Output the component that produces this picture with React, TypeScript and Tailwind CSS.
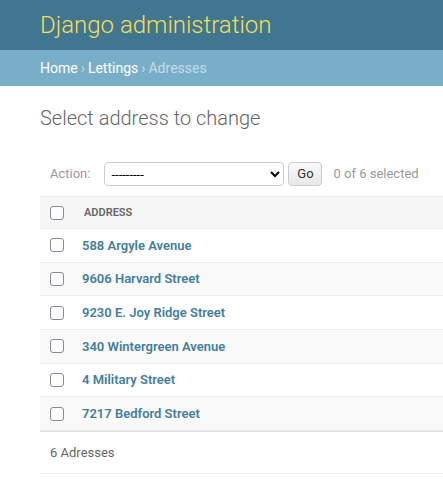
import React from 'react';

const ADDRESSES = [
  '588 Argyle Avenue',
  '9606 Harvard Street',
  '9230 E. Joy Ridge Street',
  '340 Wintergreen Avenue',
  '4 Military Street',
  '7217 Bedford Street',
];

const Box = () => (
  <input
    type="checkbox"
    className="m-0 h-[14px] w-[14px] shrink-0 appearance-none rounded-[3px] border border-[#8a8796] bg-white"
  />
);

export default function App() {
  return (
    <div className="min-h-[501px] bg-white font-['Roboto','Liberation_Sans',sans-serif] text-[13px] text-[#333]">
      {/* Header */}
      <div className="flex h-[50px] items-center bg-[#417690] px-10">
        <h1 className="text-[24px] font-light leading-none text-[#f5dd5d]">Django administration</h1>
      </div>

      {/* Breadcrumbs */}
      <div className="flex h-[36px] items-center bg-[#79aec8] px-10 text-[14px] text-[#c4dce8]">
        <a className="text-white">Home</a>
        <span className="px-[3px]">›</span>
        <a className="text-white">Lettings</a>
        <span className="px-[3px]">›</span>
        <span>Adresses</span>
      </div>

      {/* Content */}
      <div className="pl-10 pt-5">
        <h1 className="mb-5 text-[20px] font-light leading-[24px] text-[#666]">Select address to change</h1>

        <div className="flex h-[46px] items-center px-[10px] pt-[2px] text-[#999]">
          <label className="mr-[14px]">Action:</label>
          <select className="h-[24px] w-[180px] rounded-[4px] border border-[#ccc] bg-white pl-[2px] text-[13px] text-black">
            <option>---------</option>
          </select>
          <button className="ml-[4px] h-[24px] w-[34px] rounded-[4px] border border-[#ccc] bg-gradient-to-b from-[#fafafa] to-[#e8e8e8] text-[13px] text-[#333]">
            Go
          </button>
          <span className="ml-[11px]">0 of 6 selected</span>
        </div>

        {/* Table */}
        <div>
          <div className="flex h-[33px] items-center border-y border-[#eee] bg-[#f6f6f6] pl-[10px]">
            <Box />
            <span className="ml-[20px] mt-[2px] text-[11px] font-semibold uppercase text-[#666]">Address</span>
          </div>
          {ADDRESSES.map((a, i) => (
            <div
              key={a}
              className={`flex h-[33.67px] items-center border-b border-[#eee] pl-[10px] ${i % 2 === 1 ? 'bg-[#f9f9f9]' : 'bg-white'}`}
            >
              <Box />
              <a className="ml-[18px] font-semibold text-[#447e9b]">{a}</a>
            </div>
          ))}
        </div>

        <div className="flex h-[43px] items-center border-t border-b border-t-[#ddd] border-b-[#eee] pl-[10px] text-[#666]">
          6 Adresses
        </div>
      </div>
    </div>
  );
}
